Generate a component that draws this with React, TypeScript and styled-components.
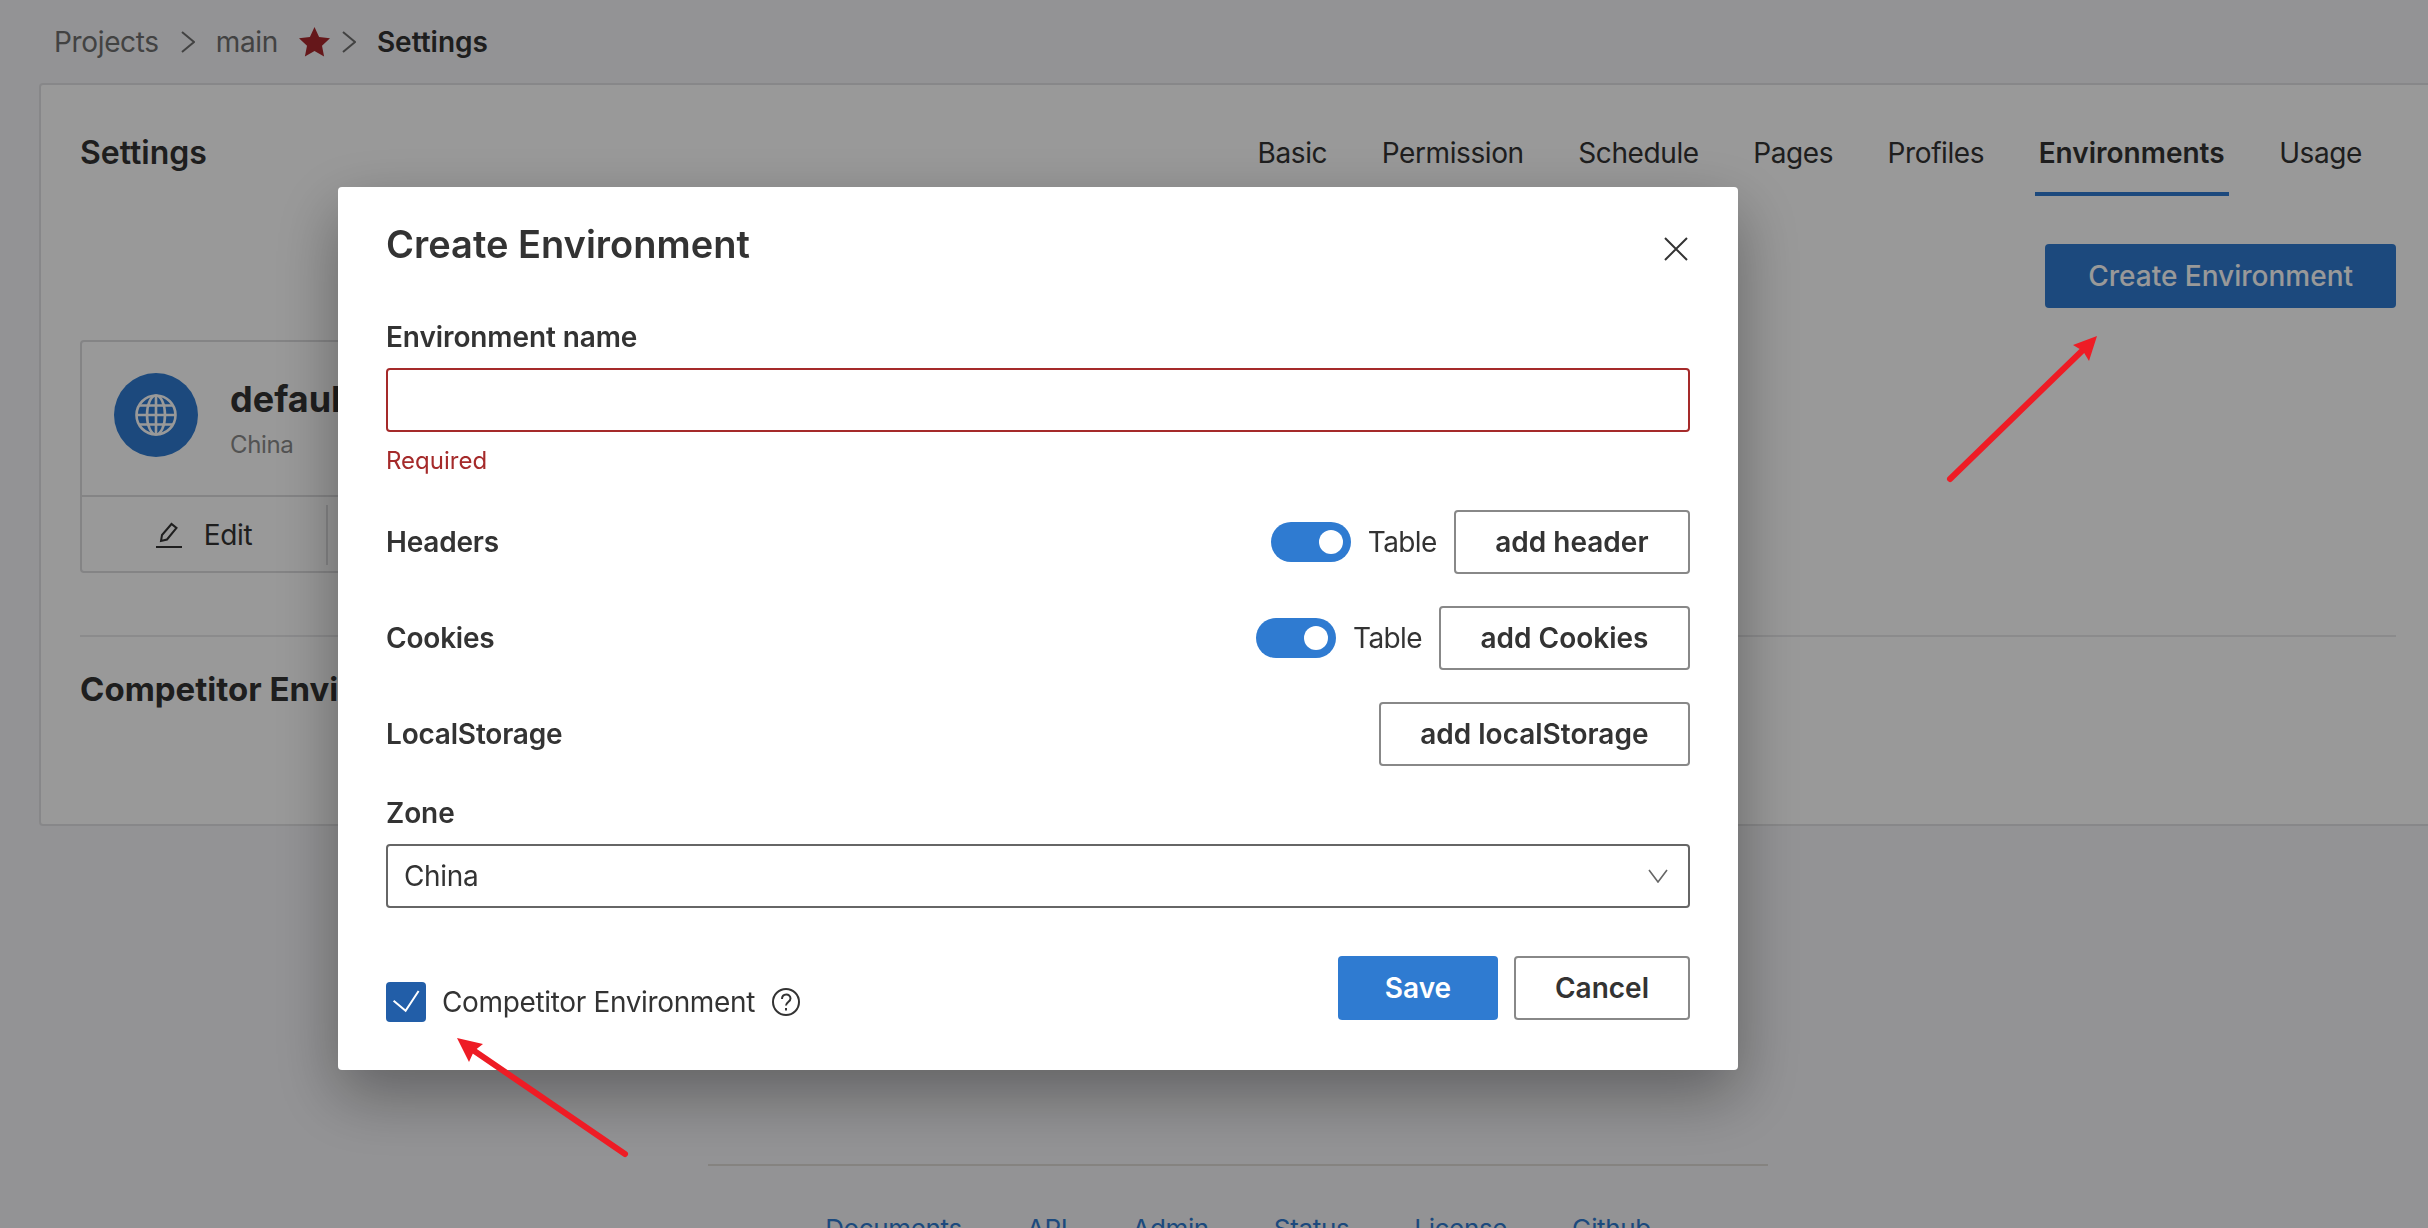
import styled, { createGlobalStyle } from "styled-components";

const GlobalStyle = createGlobalStyle`
    html, body {
        margin: 0;
        height: 100%;
        overflow: hidden;
        background: #f5f5f8;
    }
    * {
        box-sizing: border-box;
    }
    body {
        font-family: Inter, "Noto Sans", "Liberation Sans", sans-serif;
        font-size: 28px;
        letter-spacing: -0.35px;
        color: #333;
    }
`;

const Page = styled.div`
    width: 2428px;
    height: 1228px;
    overflow: hidden;
`;

const Breadcrumb = styled.nav`
    height: 83px;
    padding-left: 54px;
    display: flex;
    align-items: center;
    line-height: 40px;
    color: #6f6f6f;
`;

const Crumb = styled.span<{ $current?: boolean }>`
    font-weight: ${(props) => (props.$current ? 600 : 400)};
    letter-spacing: ${(props) => (props.$current ? "0" : "-0.35px")};
    color: ${(props) => (props.$current ? "#333" : "#6f6f6f")};
`;

const CrumbChevron = styled.svg<{ $near?: boolean }>`
    width: 14px;
    height: 22px;
    margin: 0 21px 0 ${(props) => (props.$near ? "12px" : "22px")};
    fill: none;
    stroke: #6f6f6f;
    stroke-width: 2;
`;

const Star = styled.svg`
    width: 31px;
    height: 30px;
    margin-left: 21px;
    fill: #a8272c;
`;

const Panel = styled.section`
    height: 743px;
    margin-left: 39px;
    margin-right: -4px;
    padding: 0 34px 0 39px;
    background: #fff;
    border: 2px solid #e2e2e4;
    border-radius: 4px;
`;

const PanelHead = styled.header`
    height: 111px;
    display: flex;
    align-items: flex-start;
    justify-content: space-between;
`;

const PanelTitle = styled.h1`
    margin: 48px 0 0;
    font-size: 32px;
    line-height: 40px;
    font-weight: 600;
    letter-spacing: 0;
`;

const Tabs = styled.div`
    display: flex;
    gap: 46.5px;
    padding-right: 30px;
`;

const Tab = styled.div<{ $active?: boolean }>`
    height: 111px;
    padding: 48px 4px 0;
    line-height: 40px;
    font-weight: ${(props) => (props.$active ? 600 : 400)};
    letter-spacing: ${(props) => (props.$active ? "0" : "-0.4px")};
    border-bottom: 4px solid ${(props) => (props.$active ? "#2f7bd1" : "transparent")};
`;

const CreateRow = styled.div`
    display: flex;
    justify-content: flex-end;
    margin-top: 48px;
`;

const PrimaryButton = styled.button`
    height: 64px;
    padding: 0 43px;
    border: none;
    border-radius: 4px;
    background: #2f7bd1;
    color: #fff;
    font: 500 28px Inter, sans-serif;
`;

const EnvCard = styled.article`
    width: 620px;
    height: 233px;
    margin-top: 32px;
    border: 2px solid #dcdcde;
    border-radius: 4px;
`;

const EnvInfo = styled.div`
    height: 155px;
    padding: 31px 32px 0;
    display: flex;
    gap: 32px;
    border-bottom: 2px solid #dcdcde;
`;

const Avatar = styled.div`
    width: 84px;
    height: 84px;
    border-radius: 50%;
    background: #2f7bd1;
    display: flex;
    align-items: center;
    justify-content: center;
`;

const GlobeIcon = styled.svg`
    width: 42px;
    height: 42px;
    fill: none;
    stroke: #fff;
    stroke-width: 2.6;
`;

const EnvName = styled.div`
    margin-top: -2px;
    font-size: 36px;
    line-height: 56px;
    font-weight: 700;
    letter-spacing: 0;
`;

const EnvZone = styled.div`
    font-size: 24px;
    line-height: 36px;
    color: #8a8a8a;
`;

const EnvActions = styled.div`
    height: 76px;
    padding: 8px 0;
    display: flex;
`;

const EnvAction = styled.div`
    width: 246px;
    display: flex;
    align-items: center;
    justify-content: center;
    gap: 22px;
    border-right: 2px solid #dcdcde;
    &:last-child {
        border-right: none;
    }
`;

const PencilIcon = styled.svg`
    width: 26px;
    height: 26px;
    fill: none;
    stroke: #333;
    stroke-width: 2;
`;

const PanelDivider = styled.hr`
    margin: 62px 0 0;
    border: none;
    border-top: 2px solid #e8e8ea;
`;

const SectionTitle = styled.h2`
    margin: 32px 0 0;
    font-size: 33px;
    line-height: 40px;
    font-weight: 700;
    letter-spacing: 0;
`;

const Footer = styled.footer`
    width: 1060px;
    margin: 338px 0 0 708px;
    border-top: 2px solid #dedbd6;
    padding-top: 43px;
    display: flex;
    justify-content: center;
    gap: 65px;
    font-size: 26px;
    line-height: 40px;
    color: #2f7bd1;
`;

const Backdrop = styled.div`
    position: fixed;
    inset: 0;
    background: rgba(0, 0, 0, 0.4);
`;

const Modal = styled.div`
    position: fixed;
    left: 338px;
    top: 187px;
    width: 1400px;
    height: 883px;
    padding: 35px 48px 0;
    background: #fff;
    border-radius: 4px;
    box-shadow: 0 24px 64px rgba(0, 0, 0, 0.35);
`;

const ModalHead = styled.div`
    display: flex;
    justify-content: space-between;
    align-items: flex-start;
`;

const ModalTitle = styled.h2`
    margin: 0;
    font-size: 38px;
    line-height: 44px;
    font-weight: 600;
    letter-spacing: 0;
`;

const CloseIcon = styled.svg`
    width: 24px;
    height: 24px;
    margin: 15px 2px 0 0;
    fill: none;
    stroke: #333;
    stroke-width: 2;
`;

const FieldLabel = styled.label<{ $top: number }>`
    display: block;
    margin-top: ${(props) => props.$top}px;
    line-height: 40px;
    font-weight: 600;
    letter-spacing: -0.1px;
`;

const NameInput = styled.div`
    height: 64px;
    margin-top: 11px;
    border: 2px solid #a52a2a;
    border-radius: 4px;
`;

const ErrorText = styled.div`
    margin-top: 9px;
    font-size: 24px;
    line-height: 40px;
    letter-spacing: 0;
    color: #a52a2a;
`;

const Rows = styled.div`
    margin-top: 29px;
    display: flex;
    flex-direction: column;
    gap: 32px;
`;

const Row = styled.div`
    height: 64px;
    display: flex;
    align-items: center;
    gap: 17px;
`;

const RowLabel = styled.div`
    margin-right: auto;
    font-weight: 600;
    letter-spacing: -0.2px;
`;

const Toggle = styled.div`
    width: 80px;
    height: 40px;
    padding: 8px;
    border-radius: 20px;
    background: #2f7bd1;
    display: flex;
    justify-content: flex-end;
`;

const Knob = styled.div`
    width: 24px;
    height: 24px;
    border-radius: 50%;
    background: #fff;
`;

const TableLabel = styled.span`
    letter-spacing: -0.6px;
`;

const OutlineButton = styled.button`
    height: 64px;
    padding: 0 39.5px;
    border: 2px solid #888;
    border-radius: 4px;
    background: #fff;
    color: #333;
    font: 600 28px Inter, sans-serif;
`;

const ZoneSelect = styled.div`
    height: 64px;
    margin-top: 11px;
    padding: 0 20px 0 16px;
    display: flex;
    align-items: center;
    justify-content: space-between;
    border: 2px solid #666;
    border-radius: 4px;
`;

const SelectChevron = styled.svg`
    width: 20px;
    height: 14px;
    fill: none;
    stroke: #666;
    stroke-width: 1.6;
`;

const ModalFoot = styled.div`
    margin-top: 48px;
    display: flex;
    justify-content: space-between;
    align-items: flex-start;
`;

const CheckField = styled.div`
    margin-top: 26px;
    display: flex;
    align-items: center;
`;

const CheckBox = styled.div`
    width: 40px;
    height: 40px;
    border-radius: 4px;
    background: #225ea8;
    display: flex;
    align-items: center;
    justify-content: center;
`;

const CheckMark = styled.svg`
    width: 28px;
    height: 26px;
    fill: none;
    stroke: #fff;
    stroke-width: 2;
`;

const CheckLabel = styled.span`
    margin: 0 17px 0 16px;
`;

const HelpIcon = styled.svg`
    width: 28px;
    height: 28px;
    fill: none;
    stroke: #333;
    stroke-width: 2;
`;

const FootActions = styled.div`
    display: flex;
    gap: 16px;
`;

const SaveButton = styled(PrimaryButton)`
    width: 160px;
    padding: 0;
    font-weight: 600;
`;

const CancelButton = styled(OutlineButton)`
    width: 176px;
    padding: 0;
`;

const Annotations = styled.svg`
    position: fixed;
    inset: 0;
    width: 2428px;
    height: 1228px;
    pointer-events: none;
`;

export default function App() {
    return (
        <Page>
            <GlobalStyle />
            <Breadcrumb>
                <Crumb>Projects</Crumb>
                <CrumbChevron viewBox="0 0 14 22">
                    <path d="M1 1l12 10L1 21" />
                </CrumbChevron>
                <Crumb>main</Crumb>
                <Star viewBox="0 0 31 30">
                    <path d="M15.5 0l4.6 10 10.9 1.3-8 7.4 2.1 10.8-9.6-5.400-9.600 5.400 2.100-10.800-8-7.400L10.900 10z" />
                </Star>
                <CrumbChevron $near viewBox="0 0 14 22">
                    <path d="M1 1l12 10L1 21" />
                </CrumbChevron>
                <Crumb $current>Settings</Crumb>
            </Breadcrumb>
            <Panel>
                <PanelHead>
                    <PanelTitle>Settings</PanelTitle>
                    <Tabs>
                        <Tab>Basic</Tab>
                        <Tab>Permission</Tab>
                        <Tab>Schedule</Tab>
                        <Tab>Pages</Tab>
                        <Tab>Profiles</Tab>
                        <Tab $active>Environments</Tab>
                        <Tab>Usage</Tab>
                    </Tabs>
                </PanelHead>
                <CreateRow>
                    <PrimaryButton>Create Environment</PrimaryButton>
                </CreateRow>
                <EnvCard>
                    <EnvInfo>
                        <Avatar>
                            <GlobeIcon viewBox="0 0 42 42">
                                <circle cx="21" cy="21" r="19.500" />
                                <ellipse cx="21" cy="21" rx="9" ry="19.500" />
                                <path d="M21 1.500v39M1.500 21h39M4.500 11.500h33M4.500 30.500h33" />
                            </GlobeIcon>
                        </Avatar>
                        <div>
                            <EnvName>default</EnvName>
                            <EnvZone>China</EnvZone>
                        </div>
                    </EnvInfo>
                    <EnvActions>
                        <EnvAction>
                            <PencilIcon viewBox="0 0 26 26">
                                <path d="M5 19l1-6L15.500 2l5 4L11 17.500z" />
                                <path d="M0 25h26" />
                            </PencilIcon>
                            Edit
                        </EnvAction>
                        <EnvAction>Delete</EnvAction>
                    </EnvActions>
                </EnvCard>
                <PanelDivider />
                <SectionTitle>Competitor Environments</SectionTitle>
            </Panel>
            <Footer>
                <span>Documents</span>
                <span>API</span>
                <span>Admin</span>
                <span>Status</span>
                <span>License</span>
                <span>Github</span>
            </Footer>
            <Backdrop />
            <Modal>
                <ModalHead>
                    <ModalTitle>Create Environment</ModalTitle>
                    <CloseIcon viewBox="0 0 24 24">
                        <path d="M1 1l22 22M23 1L1 23" />
                    </CloseIcon>
                </ModalHead>
                <FieldLabel $top={51}>Environment name</FieldLabel>
                <NameInput />
                <ErrorText>Required</ErrorText>
                <Rows>
                    <Row>
                        <RowLabel>Headers</RowLabel>
                        <Toggle>
                            <Knob />
                        </Toggle>
                        <TableLabel>Table</TableLabel>
                        <OutlineButton>add header</OutlineButton>
                    </Row>
                    <Row>
                        <RowLabel>Cookies</RowLabel>
                        <Toggle>
                            <Knob />
                        </Toggle>
                        <TableLabel>Table</TableLabel>
                        <OutlineButton>add Cookies</OutlineButton>
                    </Row>
                    <Row>
                        <RowLabel>LocalStorage</RowLabel>
                        <OutlineButton>add localStorage</OutlineButton>
                    </Row>
                </Rows>
                <FieldLabel $top={27}>Zone</FieldLabel>
                <ZoneSelect>
                    China
                    <SelectChevron viewBox="0 0 20 14">
                        <path d="M1 1l9 12 9-12" />
                    </SelectChevron>
                </ZoneSelect>
                <ModalFoot>
                    <CheckField>
                        <CheckBox>
                            <CheckMark viewBox="0 0 28 26">
                                <path d="M1.600 11.700l12 10L26.600 2" />
                            </CheckMark>
                        </CheckBox>
                        <CheckLabel>Competitor Environment</CheckLabel>
                        <HelpIcon viewBox="0 0 28 28">
                            <circle cx="14" cy="14" r="13" />
                            <path d="M10 11c0-6 8.500-6 8.500-.500 0 3.500-4.500 3.500-4.500 7M14 20v2.500" />
                        </HelpIcon>
                    </CheckField>
                    <FootActions>
                        <SaveButton>Save</SaveButton>
                        <CancelButton>Cancel</CancelButton>
                    </FootActions>
                </ModalFoot>
            </Modal>
            <Annotations viewBox="0 0 2428 1228">
                <path
                    d="M1950 479L2086 347M625 1154L470 1048"
                    stroke="#ee1c25"
                    strokeWidth="6"
                    strokeLinecap="round"
                />
                <path d="M2097 336l-24 9 10 6 6 10z" fill="#ee1c25" />
                <path d="M457 1038l26 6-9 7-5 11z" fill="#ee1c25" />
            </Annotations>
        </Page>
    );
}
